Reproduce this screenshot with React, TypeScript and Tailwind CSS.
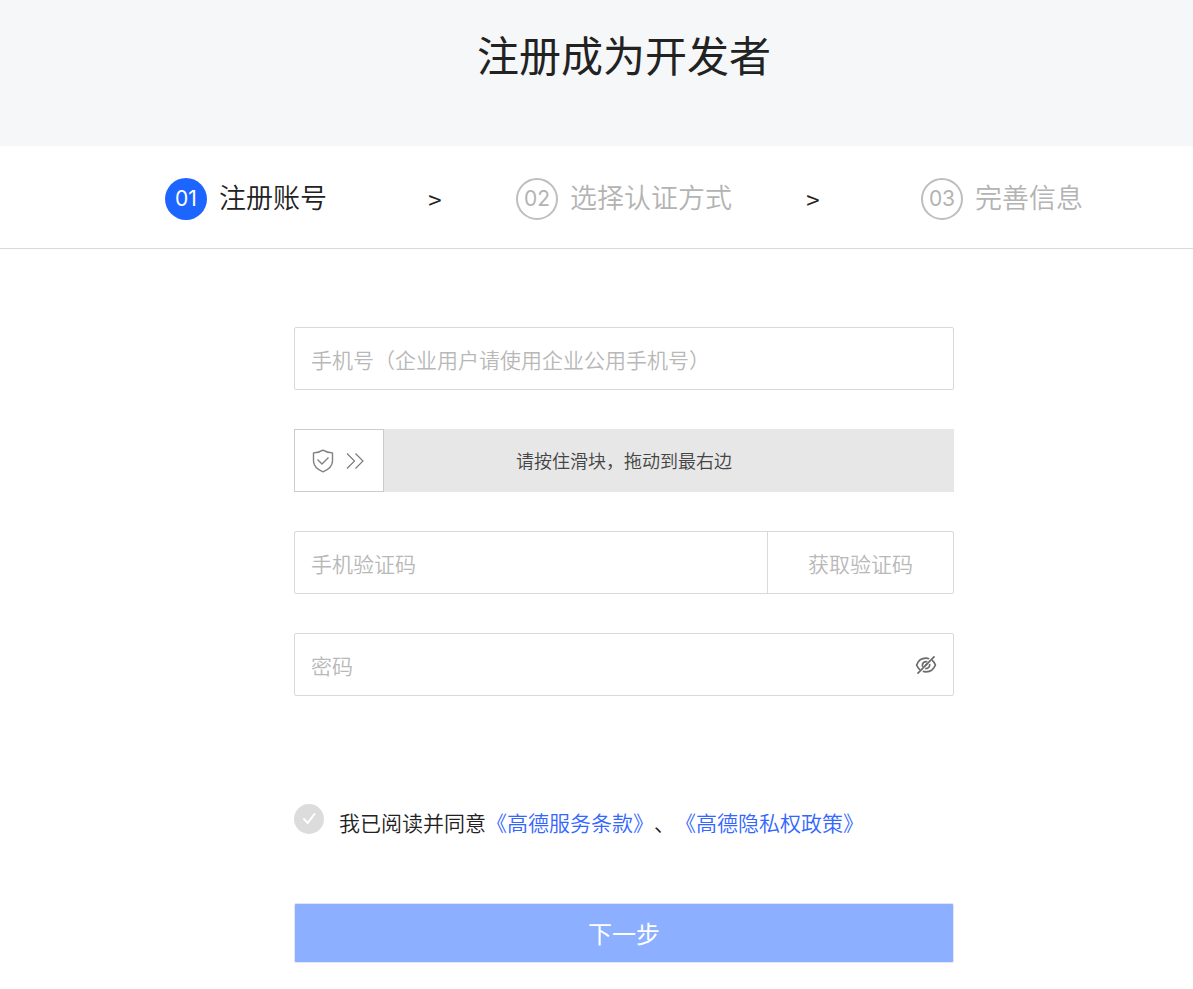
import { useState } from 'react';
import type { FormEvent, InputHTMLAttributes, ReactNode } from 'react';
import { clsx } from 'clsx';

interface Step {
  num: string;
  title: string;
}

const STEPS: Step[] = [
  { num: '01', title: '注册账号' },
  { num: '02', title: '选择认证方式' },
  { num: '03', title: '完善信息' },
];

function StepItem({ step, active }: { step: Step; active: boolean }) {
  return (
    <li className="flex flex-1 items-center justify-center gap-3" aria-current={active ? 'step' : undefined}>
      <span
        className={clsx(
          'flex size-[42px] items-center justify-center rounded-full font-[Inter,sans-serif] text-[21px] font-normal',
          active ? 'bg-[#1c66ff] text-white' : 'border-2 border-[#bebebe] text-[#b3b3b3]'
        )}
      >
        {step.num}
      </span>
      <span className={clsx('pb-1 text-[27px] leading-9', active ? 'text-[#222]' : 'text-[#b3b3b3]')}>
        {step.title}
      </span>
    </li>
  );
}

function StepArrow() {
  return (
    <li className="w-[14px] text-center text-2xl font-normal text-[#222]" aria-hidden="true">
      &gt;
    </li>
  );
}

interface FieldProps extends InputHTMLAttributes<HTMLInputElement> {
  label: string;
  children?: ReactNode;
}

function Field({ label, children, ...props }: FieldProps) {
  return (
    <div className="flex h-[63px] rounded-xs border border-[#d9d9d9] bg-white">
      <input
        aria-label={label}
        placeholder={label}
        className="min-w-0 flex-1 px-4 pt-0.5 text-[21px] text-[#222] outline-none placeholder:text-[#b8b8b8]"
        {...props}
      />
      {children}
    </div>
  );
}

function ShieldIcon() {
  return (
    <svg width="22" height="24" viewBox="0 0 22 24" fill="none" stroke="#808080" strokeWidth="1.4">
      <path d="M11 1.2C8.4 3 5 3.8 1.5 3.9V12c0 5.200 4.200 8.600 9.500 10.800C16.300 20.600 20.500 17.200 20.500 12V3.900C17 3.800 13.600 3 11 1.200Z" strokeLinejoin="round" />
      <path d="M5.500 10.500 10 15l6.500-6.500" />
    </svg>
  );
}

function DoubleArrowIcon() {
  return (
    <svg width="18" height="16" viewBox="0 0 18 16" fill="none" stroke="#777" strokeWidth="1.1">
      <path d="M1 .5 8.500 8 1 15.500M9.500.5 17 8l-7.500 7.500" />
    </svg>
  );
}

function EyeOffIcon() {
  return (
    <svg width="22" height="20" viewBox="0 0 22 20" fill="none" stroke="#6b6b6b" strokeWidth="1.700">
      <path d="M14.200 3.700C13.200 3.400 12.100 3.200 11 3.200 6.500 3.200 3 6.200 1.600 10c.7 1.900 1.900 3.600 3.400 4.800" />
      <path d="M7.800 16.300c1 .4 2.100.5 3.200.5 4.500 0 8-3 9.400-6.800-.7-1.900-1.900-3.600-3.400-4.800" />
      <path d="M12.300 6.800C9.800 5.900 7.400 7.700 7.400 10c0 .7.200 1.300.5 1.800M14.600 9c.7 2.700-1.700 5-4.400 4.500M10 10.800l2-2" />
      <path d="M2.500 18.600 19.500 1.400" />
    </svg>
  );
}

/** Слайдер проверки: бегунок следует за значением скрытого range */
function SlideVerify() {
  const [value, setValue] = useState(0);

  return (
    <div className="relative flex h-[63px] items-center justify-center bg-[#e7e7e7]">
      <span className="pb-0.5 text-lg text-[#444]">请按住滑块，拖动到最右边</span>
      <div
        className="absolute inset-y-0 flex w-[90px] items-center justify-center gap-3 border border-[#ccc] bg-white pr-0.5"
        style={{ left: `calc((100% - 90px) * ${value / 100})` }}
      >
        <ShieldIcon />
        <DoubleArrowIcon />
      </div>
      <input
        type="range"
        aria-label="请按住滑块，拖动到最右边"
        className="absolute inset-0 size-full cursor-pointer opacity-0"
        value={value}
        onChange={(e) => setValue(Number(e.target.value))}
      />
    </div>
  );
}

export default function App() {
  const [showPassword, setShowPassword] = useState(false);
  const [agreed, setAgreed] = useState(false);

  const handleSubmit = (e: FormEvent) => {
    e.preventDefault();
  };

  return (
    <div className="min-h-screen bg-white font-['Noto_Sans_CJK_SC',sans-serif] font-[350] text-[#222] [text-spacing-trim:space-all]">
      <header className="bg-[#f6f7f9] pt-6 pb-[62px] pl-[55px]">
        <h1 className="text-center text-[42px] leading-[60px] font-normal">注册成为开发者</h1>
      </header>

      <nav className="border-b border-[#d9d9d9] pt-8 pb-7 pl-[55px]" aria-label="注册步骤">
        <ol className="mx-auto flex max-w-[1120px] items-center">
          <StepItem step={STEPS[0]} active />
          <StepArrow />
          <StepItem step={STEPS[1]} active={false} />
          <StepArrow />
          <StepItem step={STEPS[2]} active={false} />
        </ol>
      </nav>

      <main className="pt-[78px] pb-6 pl-[55px]">
        <form className="mx-auto max-w-[660px]" onSubmit={handleSubmit}>
          <div className="flex flex-col gap-[39px]">
            <Field label="手机号（企业用户请使用企业公用手机号）" type="tel" />
            <SlideVerify />
            <Field label="手机验证码" type="text">
              <button type="button" className="w-[186px] border-l border-[#d9d9d9] pt-0.5 text-[21px] text-[#b8b8b8]">
                获取验证码
              </button>
            </Field>
            <Field label="密码" type={showPassword ? 'text' : 'password'}>
              <button
                type="button"
                aria-label="显示密码"
                className="flex items-center px-4"
                onClick={() => setShowPassword(!showPassword)}
              >
                <EyeOffIcon />
              </button>
            </Field>
          </div>

          <div className="mt-[108px] flex items-start gap-[15px]">
            <span className="relative flex size-[30px]">
              <input
                id="agree"
                type="checkbox"
                className="size-[30px] appearance-none rounded-full bg-[#dcdcdc] checked:bg-[#1c66ff]"
                checked={agreed}
                onChange={(e) => setAgreed(e.target.checked)}
              />
              <svg className="pointer-events-none absolute inset-0" width="30" height="30" viewBox="0 0 30 30" fill="none" stroke="#fff" strokeWidth="2" strokeLinecap="round">
                <path d="m10 15 3.700 4L20.500 10" />
              </svg>
            </span>
            <p className="pt-0.5 text-[21px] leading-8">
              <label htmlFor="agree">我已阅读并同意</label>
              <a href="#terms" className="text-[#3366ff]">《高德服务条款》</a>、
              <a href="#privacy" className="text-[#3366ff]">《高德隐私权政策》</a>
            </p>
          </div>

          <button
            type="submit"
            className="mt-[65px] h-[60px] w-full rounded-xs border border-[#e3e6ec] bg-[#8cb0ff] text-2xl font-normal text-white"
          >
            下一步
          </button>
        </form>
      </main>
    </div>
  );
}
